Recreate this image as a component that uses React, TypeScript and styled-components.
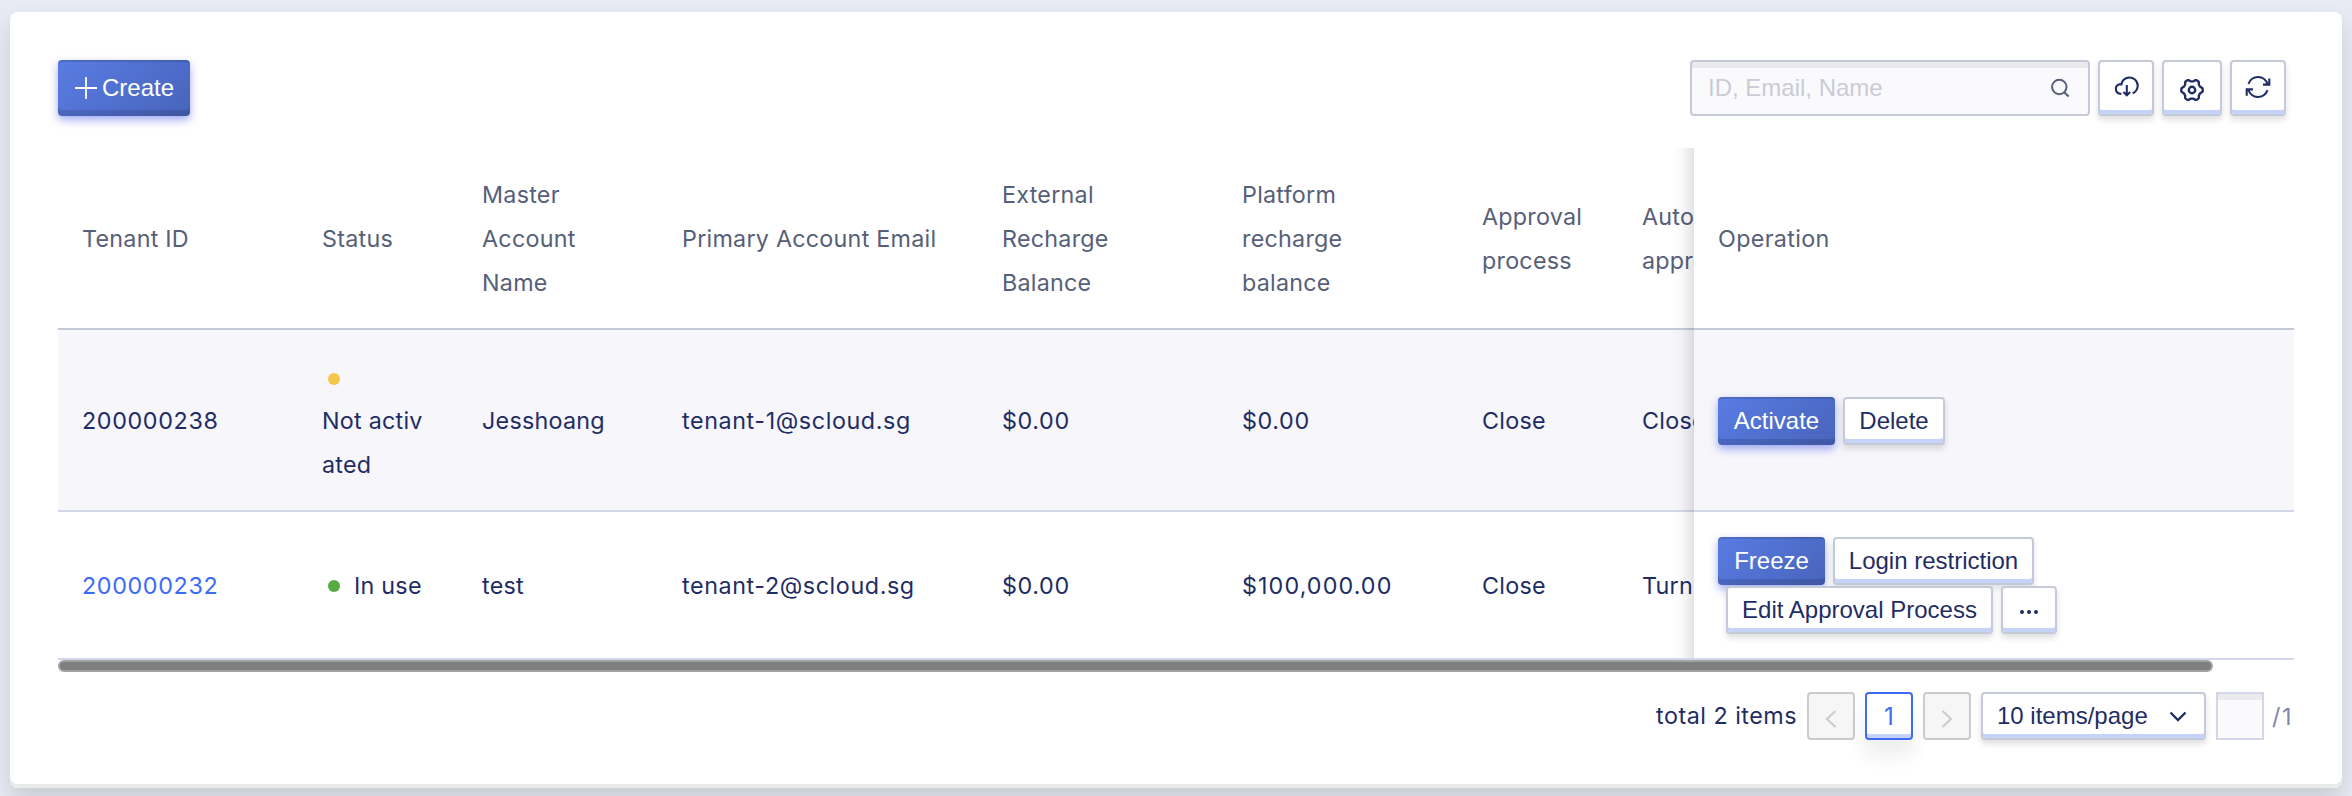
import React from "react";
import styled, { createGlobalStyle, css } from "styled-components";

const Global = createGlobalStyle`
  * { box-sizing: border-box; }
  body { margin: 0; background: #e9ebf4; font-family: Inter, "Liberation Sans", sans-serif; }
  button, input { font-family: "Liberation Sans", Arial, sans-serif; font-size: 24px; }
`;

const Page = styled.main`
  height: 796px;
  padding: 12px 10px 8px;
  overflow: hidden;
  background: #e9ebf4;
  font-size: 23.3px;
  color: #1f2d64;
`;

const Card = styled.section`
  height: 776px;
  padding: 48px 48px 0;
  border-radius: 8px;
  background: #fff;
  box-shadow: inset 0 -4px 0 #eaeaea, 0 12px 24px rgba(0, 0, 0, 0.14);
`;

const Toolbar = styled.header`
  display: flex;
  justify-content: space-between;
  height: 56px;
  margin-bottom: 32px;
`;

const Tools = styled.div`
  display: flex;
  gap: 8px;
  padding-right: 8px;
`;

const primary = css`
  border: 0;
  color: #fff;
  background: linear-gradient(135deg, #597ce3, #4864bb);
  box-shadow: inset 0 2px 0 rgba(0, 0, 0, 0.12), inset 0 -6px 0 rgba(0, 0, 0, 0.12), 0 4px 8px rgba(70, 90, 230, 0.5);
`;

const plain = css`
  border: 2px solid #c5cad9;
  color: #1f2d64;
  background: #fff;
  box-shadow: inset 0 -4px 0 #c5d3f9, 0 4px 6px rgba(0, 0, 0, 0.13);
`;

const Button = styled.button<{ $primary?: boolean; $w: number; $tall?: boolean }>`
  display: inline-flex;
  align-items: center;
  justify-content: center;
  flex: none;
  gap: 4px;
  height: ${(p) => (p.$tall ? 56 : 48)}px;
  width: ${(p) => p.$w}px;
  padding: 0;
  border-radius: 4px;
  white-space: nowrap;
  ${(p) => (p.$primary ? primary : plain)}
`;

const Search = styled.label`
  display: flex;
  align-items: center;
  width: 400px;
  height: 56px;
  padding: 0 18px 0 16px;
  border: 2px solid #c5cad9;
  border-radius: 4px;
  color: #566078;
  background: #fafafc;
  box-shadow: inset 0 6px 0 #ebebee;
`;

const SearchInput = styled.input`
  flex: 1;
  min-width: 0;
  padding: 0;
  border: 0;
  outline: 0;
  background: transparent;
  &::placeholder { color: #c9ccd6; opacity: 1; }
`;

const Table = styled.div`
  display: flex;
  height: 512px;
  line-height: 44px;
`;

const Scroller = styled.div`
  flex: none;
  width: 1636px;
  overflow: hidden;
`;

const Fixed = styled.div`
  position: relative;
  flex: none;
  width: 600px;
  &::before {
    content: "";
    position: absolute;
    top: 0;
    bottom: 2px;
    left: -22px;
    width: 22px;
    background: linear-gradient(to right, transparent, rgba(0, 0, 0, 0.025) 45%, rgba(0, 0, 0, 0.11));
    pointer-events: none;
  }
`;

const Row = styled.div<{ $kind: "head" | "tint" | "last" }>`
  display: grid;
  grid-template-columns: 240px 160px 200px 320px 240px 240px 160px 160px;
  align-items: center;
  height: ${(p) => (p.$kind === "last" ? 148 : 182)}px;
  color: ${(p) => (p.$kind === "head" ? "#566078" : "#1f2d64")};
  background: ${(p) => (p.$kind === "tint" ? "#f6f6fb" : "#fff")};
  border-bottom: 2px solid ${(p) => (p.$kind === "head" ? "#c5cad9" : "#d3d7ea")};
`;

const tracking = { text: 0.25, id: 0.64, email: 0.6, money: 1.1 };

const Cell = styled.div<{ $t?: keyof typeof tracking }>`
  padding: 2px 0 0 24px;
  white-space: pre-line;
  letter-spacing: ${(p) => tracking[p.$t ?? "text"]}px;
`;

const Link = styled.a`
  color: #3d6bf5;
`;

const Dot = styled.i<{ $color: string }>`
  width: 12px;
  height: 12px;
  margin: 0 14px 0 6px;
  border-radius: 50%;
  background: ${(p) => p.$color};
`;

const DotLine = styled.div`
  display: flex;
  align-items: center;
  height: 44px;
  padding-top: 4px;
`;

const StatusLine = styled.div`
  display: flex;
  align-items: center;
`;

const OpRow = styled(Row)`
  display: flex;
  flex-direction: column;
  justify-content: center;
  align-items: flex-start;
  gap: 1px;
  padding: ${(p) => (p.$kind === "last" ? 1 : 2)}px 0 0 24px;
  letter-spacing: 0.35px;
`;

const Actions = styled.div<{ $indent?: boolean }>`
  display: flex;
  gap: 8px;
  margin-left: ${(p) => (p.$indent ? 8 : 0)}px;
`;

const ScrollThumb = styled.div`
  width: 2155px;
  height: 12px;
  border: 2px solid #a3a3a3;
  border-radius: 6px;
  background: #7f7f7f;
`;

const Pager = styled.nav`
  display: flex;
  justify-content: flex-end;
  gap: 10px;
  height: 48px;
  margin-top: 20px;
`;

const Total = styled.span`
  line-height: 47px;
  letter-spacing: 0.5px;
`;

const PageButton = styled.button<{ $current?: boolean }>`
  display: flex;
  align-items: center;
  justify-content: center;
  width: 48px;
  height: 48px;
  padding: 0;
  border: 2px solid ${(p) => (p.$current ? "#3d6bf5" : "#cbcbcb")};
  border-radius: 4px;
  color: ${(p) => (p.$current ? "#3d6bf5" : "#cbcbcb")};
  background: ${(p) => (p.$current ? "#fff" : "#f6f6f6")};
  box-shadow: ${(p) => (p.$current ? "inset 0 -4px 0 #c5d3f9, 0 16px 20px rgba(0, 0, 0, 0.07)" : "none")};
  font-family: Inter, sans-serif;
`;

const PageSize = styled(Button)`
  justify-content: space-between;
  padding: 0 16px 0 14px;
`;

const Jump = styled.input`
  width: 48px;
  height: 48px;
  border: 2px solid #d3d7ea;
  background: #fafafc;
  box-shadow: inset 0 6px 0 #ebebee;
`;

const PageCount = styled.span`
  width: 22px;
  margin-left: -2px;
  line-height: 49px;
  letter-spacing: 1.5px;
  color: #7d87a8;
`;

interface SvgProps {
  w: number;
  h?: number;
  sw?: number;
  children: React.ReactNode;
}

const Svg = ({ w, h = w, sw = 2, children }: SvgProps) => (
  <svg width={w} height={h} viewBox={`0 0 ${w} ${h}`} fill="none" stroke="currentColor" strokeWidth={sw}>
    {children}
  </svg>
);

const PlusIcon = () => <Svg w={24} sw={1.8}><path d="M12 1v22M1 12h22" /></Svg>;

const SearchIcon = () => (
  <Svg w={20}><circle cx="9.3" cy="9" r="7.200" /><path d="M14.300 14.200l4.300 4.300" /></Svg>
);

const CloudIcon = () => (
  <Svg w={26} sw={2.1}>
    <path d="M8.500 18.800H7A4.900 4.900 0 0 1 6.600 9.200Q7.600 9.100 8.400 9.400A8.200 8.200 0 1 1 19.600 18.300M13.800 10v9.500M10.400 17l3.400 3.200 3.400-3.200" />
  </Svg>
);

// Six rounded teeth around a hub.
const gearPath =
  Array.from({ length: 120 }, (_, i) => {
    const a = (i / 120) * Math.PI * 2;
    const wave = Math.cos(6 * a);
    const r = 9.7 + 1.1 * Math.tanh(1.8 * wave);
    return `${i ? "L" : "M"}${(15 + r * Math.cos(a)).toFixed(2)} ${(17 + r * Math.sin(a)).toFixed(2)}`;
  }).join("") + "Z";

const GearIcon = () => (
  <Svg w={30} sw={2.4}><path d={gearPath} strokeLinejoin="round" /><circle cx="15" cy="17" r="3.200" /></Svg>
);

const RefreshIcon = () => (
  <Svg w={26} sw={2.1}>
    <path d="M3.500 8.900A10 10 0 0 1 22.600 9.200M24.300 3.500V9.600H18M22.500 15.200A10 10 0 0 1 3.400 14.800M1.700 20.700V14.400H8" />
  </Svg>
);

const MoreIcon = () => (
  <Svg w={20} h={8}>
    <g fill="currentColor" stroke="none"><circle cx="3" cy="6" r="2" /><circle cx="10" cy="6" r="2" /><circle cx="17" cy="6" r="2" /></g>
  </Svg>
);

const headers = [
  "Tenant ID", "Status", "Master\nAccount\nName", "Primary Account Email", "External\nRecharge\nBalance",
  "Platform\nrecharge\nbalance", "Approval\nprocess", "Auto\nappr",
];

export default function App() {
  return (
    <Page>
      <Global />
      <Card>
        <Toolbar>
          <Button $primary $tall $w={132}><PlusIcon />Create</Button>
          <Tools>
            <Search>
              <SearchInput placeholder="ID, Email, Name" />
              <SearchIcon />
            </Search>
            <Button $tall $w={56}><CloudIcon /></Button>
            <Button $tall $w={60}><GearIcon /></Button>
            <Button $tall $w={56}><RefreshIcon /></Button>
          </Tools>
        </Toolbar>
        <Table>
          <Scroller>
            <Row $kind="head">{headers.map((h) => <Cell key={h}>{h}</Cell>)}</Row>
            <Row $kind="tint">
              <Cell $t="id">200000238</Cell>
              <Cell><DotLine><Dot $color="#f5c64b" /></DotLine>{"Not activ\nated"}</Cell>
              <Cell>Jesshoang</Cell>
              <Cell $t="email">tenant-1@scloud.sg</Cell>
              <Cell $t="id">$0.00</Cell>
              <Cell $t="id">$0.00</Cell>
              <Cell>Close</Cell>
              <Cell>Close</Cell>
            </Row>
            <Row $kind="last">
              <Cell $t="id"><Link>200000232</Link></Cell>
              <Cell><StatusLine><Dot $color="#55ab41" />In use</StatusLine></Cell>
              <Cell>test</Cell>
              <Cell $t="email">tenant-2@scloud.sg</Cell>
              <Cell $t="id">$0.00</Cell>
              <Cell $t="money">$100,000.00</Cell>
              <Cell>Close</Cell>
              <Cell>Turn</Cell>
            </Row>
          </Scroller>
          <Fixed>
            <OpRow $kind="head">Operation</OpRow>
            <OpRow $kind="tint">
              <Actions><Button $primary $w={117}>Activate</Button><Button $w={102}>Delete</Button></Actions>
            </OpRow>
            <OpRow $kind="last">
              <Actions><Button $primary $w={107}>Freeze</Button><Button $w={201}>Login restriction</Button></Actions>
              <Actions $indent>
                <Button $w={267}>Edit Approval Process</Button>
                <Button $w={56}><MoreIcon /></Button>
              </Actions>
            </OpRow>
          </Fixed>
        </Table>
        <ScrollThumb />
        <Pager>
          <Total>total 2 items</Total>
          <PageButton><Svg w={12} h={24}><path d="M10.500 7L2 15l8.500 8" /></Svg></PageButton>
          <PageButton $current>1</PageButton>
          <PageButton><Svg w={12} h={24}><path d="M1.500 7L10 15l-8.500 8" /></Svg></PageButton>
          <PageSize $w={225}>10 items/page<Svg w={20} h={12} sw={2.3}><path d="M2.500 2.500l7.500 7.500 7.500-7.500" /></Svg></PageSize>
          <Jump />
          <PageCount>/1</PageCount>
        </Pager>
      </Card>
    </Page>
  );
}
